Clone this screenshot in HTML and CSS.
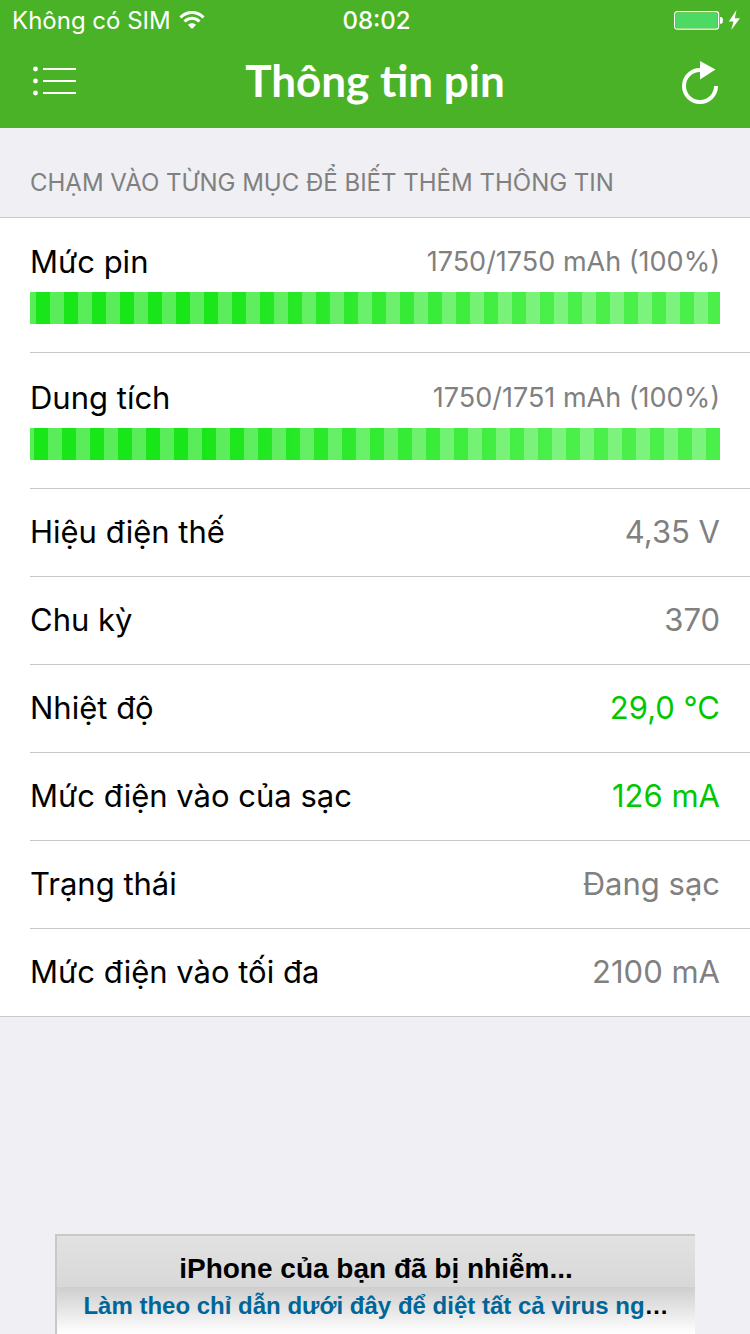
FILE: index.html
```
<!DOCTYPE html>
<html lang="vi">
<head>
  <meta charset="UTF-8">
  <meta name="viewport" content="width=device-width, initial-scale=1.0">
  <title>Thông tin pin</title>
  <link rel="stylesheet" href="styles.css">
</head>
<body>

  <header class="header">
    <div class="status-bar">
      <div class="status-left">
        <span>Không có SIM</span>
        <svg class="wifi" width="26" height="20" viewBox="0 0 26 20" fill="none" stroke="#fff" stroke-width="3">
          <path d="M1.5 7.5C8 0.8 18 0.8 24.5 7.5"/>
          <path d="M5.5 11.5C9.8 7.2 16.2 7.2 20.5 11.5"/>
          <path d="M13 19L8.8 14.8C11.2 12.6 14.8 12.6 17.2 14.8Z" fill="#fff" stroke="none"/>
        </svg>
      </div>
      <div class="status-time">08:02</div>
      <div class="status-right">
        <svg width="68" height="22" viewBox="0 0 68 22">
          <rect x="1.6" y="2.6" width="44" height="17.5" rx="2.5" fill="none" stroke="#fff" stroke-width="1.2"/>
          <rect x="3" y="4" width="41.5" height="15" rx="1.5" fill="#4cd964"/>
          <path d="M47 8H48.2Q50 8.4 50 11.4T48.2 14.8H47Z" fill="#fff"/>
          <path d="M63.5 1L55.8 12.5H60.5L58.2 21L67 9.2H61.8Z" fill="#fff"/>
        </svg>
      </div>
    </div>
    <div class="nav-bar">
      <button class="nav-button" aria-label="Menu">
        <svg width="44" height="32" viewBox="0 0 44 32">
          <g fill="#fff">
            <circle cx="3.5" cy="4" r="2.4"/>
            <circle cx="3.5" cy="16" r="2.4"/>
            <circle cx="3.5" cy="28" r="2.4"/>
            <path d="M11 3H44V5H11ZM11 15H44V17H11ZM11 27H44V29H11Z"/>
          </g>
        </svg>
      </button>
      <h1>Thông tin pin</h1>
      <button class="nav-button" aria-label="Tải lại">
        <svg width="38" height="46" viewBox="0 0 38 46">
          <path d="M20 12A16 16 0 1 0 36 28" fill="none" stroke="#fff" stroke-width="4"/>
          <path d="M20 3L35.5 11.5L20 21.5Z" fill="#fff"/>
        </svg>
      </button>
    </div>
  </header>

  <main>
    <h2 class="section-title">CHẠM VÀO TỪNG MỤC ĐỂ BIẾT THÊM THÔNG TIN</h2>
    <ul class="info-list">
      <li class="tall">
        <div class="row">
          <span>Mức pin</span>
          <span class="value small">1750/1750 mAh (100%)</span>
        </div>
        <div class="bar level"></div>
      </li>
      <li class="tall">
        <div class="row">
          <span>Dung tích</span>
          <span class="value small">1750/1751 mAh (100%)</span>
        </div>
        <div class="bar capacity"></div>
      </li>
      <li class="row">
        <span>Hiệu điện thế</span>
        <span class="value">4,35 V</span>
      </li>
      <li class="row">
        <span>Chu kỳ</span>
        <span class="value">370</span>
      </li>
      <li class="row">
        <span>Nhiệt độ</span>
        <span class="value good">29,0 °C</span>
      </li>
      <li class="row">
        <span>Mức điện vào của sạc</span>
        <span class="value good">126 mA</span>
      </li>
      <li class="row">
        <span>Trạng thái</span>
        <span class="value">Đang sạc</span>
      </li>
      <li class="row">
        <span>Mức điện vào tối đa</span>
        <span class="value">2100 mA</span>
      </li>
    </ul>
  </main>

  <aside class="ad">
    <div class="ad-title">iPhone của bạn đã bị nhiễm...</div>
    <div class="ad-text"><a href="#">Làm theo chỉ dẫn dưới đây để diệt tất cả virus ng</a>…</div>
  </aside>

</body>
</html>
```
FILE: styles.css
```
* {
  box-sizing: border-box;
}
body {
  margin: 0;
  min-height: 100vh;
  display: flex;
  flex-direction: column;
  font-family: Inter, "Liberation Sans", sans-serif;
  background-color: #efeff4;
  color: #000;
}
.header {
  background-color: #4ab226;
  color: white;
}
.status-bar {
  display: grid;
  grid-template-columns: 1fr auto 1fr;
  align-items: center;
  height: 40px;
  padding: 0 9px 0 12px;
  font-size: 24px;
}
.status-left {
  display: flex;
  align-items: center;
  gap: 8px;
}
.status-time {
  font-weight: 500;
}
.status-right {
  display: flex;
  justify-content: flex-end;
}
.nav-bar {
  display: grid;
  grid-template-columns: 1fr auto 1fr;
  align-items: center;
  height: 88px;
  padding: 0 32px 6px;
}
.nav-bar h1 {
  margin: 0;
  font-family: Lato, sans-serif;
  font-size: 44px;
  line-height: 52px;
  padding-bottom: 2px;
  font-weight: bold;
}
.nav-button {
  display: flex;
  padding: 0;
  border: none;
  background: none;
  cursor: pointer;
}
.nav-button:last-child {
  justify-self: end;
}
.section-title {
  margin: 0;
  padding: 40px 30px 20px;
  font-size: 24px;
  line-height: 29px;
  font-weight: normal;
  color: #808080;
}
.info-list {
  margin: 0;
  padding: 0 0 0 30px;
  list-style: none;
  background-color: white;
  border-top: 1px solid #c8c7cc;
  border-bottom: 1px solid #c8c7cc;
  font-size: 31px;
}
.info-list li {
  height: 88px;
  padding: 0 30px 2px 0;
  border-bottom: 1px solid #c8c7cc;
}
.info-list li:last-child {
  height: 87px;
  border-bottom: none;
}
.info-list .tall {
  height: auto;
  padding: 25px 30px 28px 0;
}
.info-list .tall + .tall {
  padding-top: 26px;
}
.row {
  display: flex;
  align-items: center;
  justify-content: space-between;
  line-height: 38px;
}
.value {
  color: #808080;
}
.value.small {
  font-size: 27px;
}
.value.good {
  color: #00c800;
}
.bar {
  height: 32px;
  margin-top: 11px;
  background-image:
    repeating-linear-gradient(90deg, rgba(255, 255, 255, 0.28) 0 14px, transparent 14px 28px),
    linear-gradient(90deg, #19e619 0, #19e619 25%, #4aef4a 75%);
}
.level {
  background-position: -8px 0, 0 0;
  background-size: 784px 100%, 100% 100%;
}
.capacity {
  background-position: -10px 0, 0 0;
  background-size: 784px 100%, 100% 100%;
}
.ad {
  width: 100%;
  max-width: 640px;
  margin: auto auto 0;
  border-top: 2px solid #c8c8c8;
  border-left: 2px solid #c8c8c8;
  font-family: "Liberation Sans", Arial, sans-serif;
  font-weight: bold;
  text-align: center;
  white-space: nowrap;
}
.ad-title {
  padding-top: 15px;
  font-size: 28px;
  line-height: 36px;
  background: linear-gradient(#e2e2e2, #d8d8d8);
}
.ad-text {
  height: 47px;
  padding-top: 4px;
  font-size: 24px;
  line-height: 30px;
  background: linear-gradient(#cecece, #fff);
}
.ad-text a {
  color: #069;
  text-decoration: none;
}
```
